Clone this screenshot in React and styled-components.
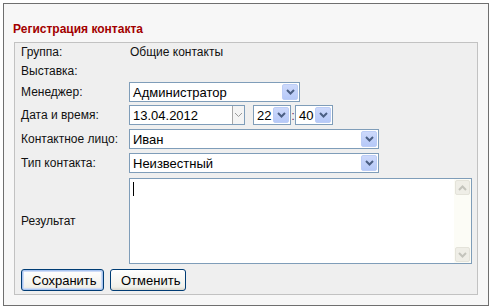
import styled, { createGlobalStyle } from "styled-components";

const GlobalStyle = createGlobalStyle`
  html, body {
    margin: 0;
    padding: 0;
    background: #ffffff;
  }
  body {
    font-family: "Liberation Sans", Arial, sans-serif;
  }
`;

function Chevron({ color = "#4b5f83", thin }) {
  return (
    <svg width="9" height="6" viewBox="0 0 9 6">
      <path
        d="M1 1 L4.5 4.5 L8 1"
        fill="none"
        stroke={color}
        strokeWidth={thin ? 1 : 2}
      />
    </svg>
  );
}

function ChevronUp({ color }) {
  return (
    <svg width="9" height="6" viewBox="0 0 9 6">
      <path d="M1 5 L4.5 1.5 L8 5" fill="none" stroke={color} strokeWidth="2" />
    </svg>
  );
}

function Select({ width, value }) {
  return (
    <SelectBox $width={width}>
      <SelectText>{value}</SelectText>
      <DropButton>
        <Chevron />
      </DropButton>
    </SelectBox>
  );
}

export default function App() {
  return (
    <>
      <GlobalStyle />
      <Window>
        <Title>Регистрация контакта</Title>
        <Panel>
          <Row $h={17}>
            <Label>Группа:</Label>
            <Value>Общие контакты</Value>
          </Row>
          <Row $h={21}>
            <Label>Выставка:</Label>
          </Row>
          <Row $h={22}>
            <Label>Менеджер:</Label>
            <Select width={171} value="Администратор" />
          </Row>
          <Row $h={24}>
            <Label>Дата и время:</Label>
            <DateBox>
              <SelectText>13.04.2012</SelectText>
              <DateButton>
                <Chevron color="#9a9a9a" thin />
              </DateButton>
            </DateBox>
            <TimeGroup>
              <Select width={38} value="22" />
              <Colon>:</Colon>
              <Select width={38} value="40" />
            </TimeGroup>
          </Row>
          <Row $h={24}>
            <Label>Контактное лицо:</Label>
            <Select width={250} value="Иван" />
          </Row>
          <Row $h={24}>
            <Label>Тип контакта:</Label>
            <Select width={250} value="Неизвестный" />
          </Row>
          <ResultRow>
            <Label>Результат</Label>
            <TextArea>
              <Caret />
              <ScrollBar>
                <ScrollButton>
                  <ChevronUp color="#c4c4bc" />
                </ScrollButton>
                <ScrollButton>
                  <Chevron color="#c4c4bc" />
                </ScrollButton>
              </ScrollBar>
            </TextArea>
          </ResultRow>
          <ButtonRow>
            <Button $primary>Сохранить</Button>
            <Button>Отменить</Button>
          </ButtonRow>
        </Panel>
      </Window>
    </>
  );
}

const Window = styled.div`
  margin: 3px 0 0 3px;
  width: 486px;
  height: 303px;
  box-sizing: border-box;
  border: 1px solid #6f6f6f;
  background: #f7f7f7;
  padding: 0 10px;
`;

const Title = styled.div`
  padding-top: 18px;
  margin-left: -1px;
  height: 14px;
  line-height: 14px;
  margin-bottom: 6px;
  font-size: 12px;
  font-weight: bold;
  color: #a30000;
`;

const Panel = styled.div`
  border: 1px solid #c2c2c2;
  background: #efefef;
  padding: 0 5px 0 6px;
  height: 251px;
`;

const Row = styled.div`
  display: flex;
  align-items: center;
  height: ${(p) => p.$h}px;
`;

const Label = styled.div`
  width: 108px;
  flex-shrink: 0;
  font-size: 12px;
  color: #111;
`;

const Value = styled.div`
  font-size: 12px;
  color: #111;
  margin-left: 1px;
`;

const SelectBox = styled.div`
  width: ${(p) => p.$width}px;
  height: 20px;
  box-sizing: border-box;
  border: 1px solid #7f9db9;
  background: #fff;
  display: flex;
  align-items: center;
  justify-content: space-between;
`;

const SelectText = styled.span`
  font-size: 13px;
  color: #000;
  padding-left: 3px;
  white-space: nowrap;
`;

const DropButton = styled.div`
  width: 16px;
  height: 16px;
  margin-right: 1px;
  box-sizing: border-box;
  border-radius: 2px;
  background: linear-gradient(#cdd9fb, #b6c9f8);
  border: 1px solid #bccdf6;
  display: flex;
  align-items: center;
  justify-content: center;
`;

const DateBox = styled(SelectBox).attrs({ $width: 116 })`
  border-color: #7f9db9;
`;

const DateButton = styled.div`
  width: 12px;
  height: 18px;
  box-sizing: border-box;
  border-left: 1px solid #a7a7a7;
  background: #f4f4f4;
  display: flex;
  align-items: center;
  justify-content: center;
`;

const TimeGroup = styled.div`
  display: flex;
  align-items: center;
  margin-left: 8px;
`;

const Colon = styled.span`
  font-size: 13px;
  color: #6a2a6a;
  width: 4px;
  text-align: center;
`;

const ResultRow = styled.div`
  display: flex;
  align-items: center;
  padding-top: 3px;
  height: 86px;
`;

const TextArea = styled.div`
  position: relative;
  width: 343px;
  height: 86px;
  box-sizing: border-box;
  border: 1px solid #7f9db9;
  background: #fff;
`;

const Caret = styled.div`
  position: absolute;
  left: 3px;
  top: 3px;
  width: 1px;
  height: 14px;
  background: #000;
`;

const ScrollBar = styled.div`
  position: absolute;
  right: 0;
  top: 0;
  bottom: 0;
  width: 17px;
  background: #fcfcf6;
  display: flex;
  flex-direction: column;
  justify-content: space-between;
  align-items: center;
  padding: 1px 0;
  box-sizing: border-box;
`;

const ScrollButton = styled.div`
  width: 15px;
  height: 15px;
  box-sizing: border-box;
  border: 1px solid #e4e3da;
  border-radius: 2px;
  background: #efeee7;
  display: flex;
  align-items: center;
  justify-content: center;
`;

const ButtonRow = styled.div`
  display: flex;
  gap: 6px;
  padding-top: 5px;
`;

const Button = styled.button`
  height: 22px;
  padding: 0 10px;
  font-family: "Liberation Sans", Arial, sans-serif;
  font-size: 13px;
  color: #000;
  border: 1px solid #003c74;
  border-radius: 3px;
  background: linear-gradient(#ffffff, #f0f0ea 85%, #d8d6cc);
  box-shadow: ${(p) =>
    p.$primary ? "inset 0 0 0 1px #a8c4f0, inset 0 0 0 2px #cfdcf6" : "none"};
  width: ${(p) => (p.$primary ? "83px" : "76px")};
`;
